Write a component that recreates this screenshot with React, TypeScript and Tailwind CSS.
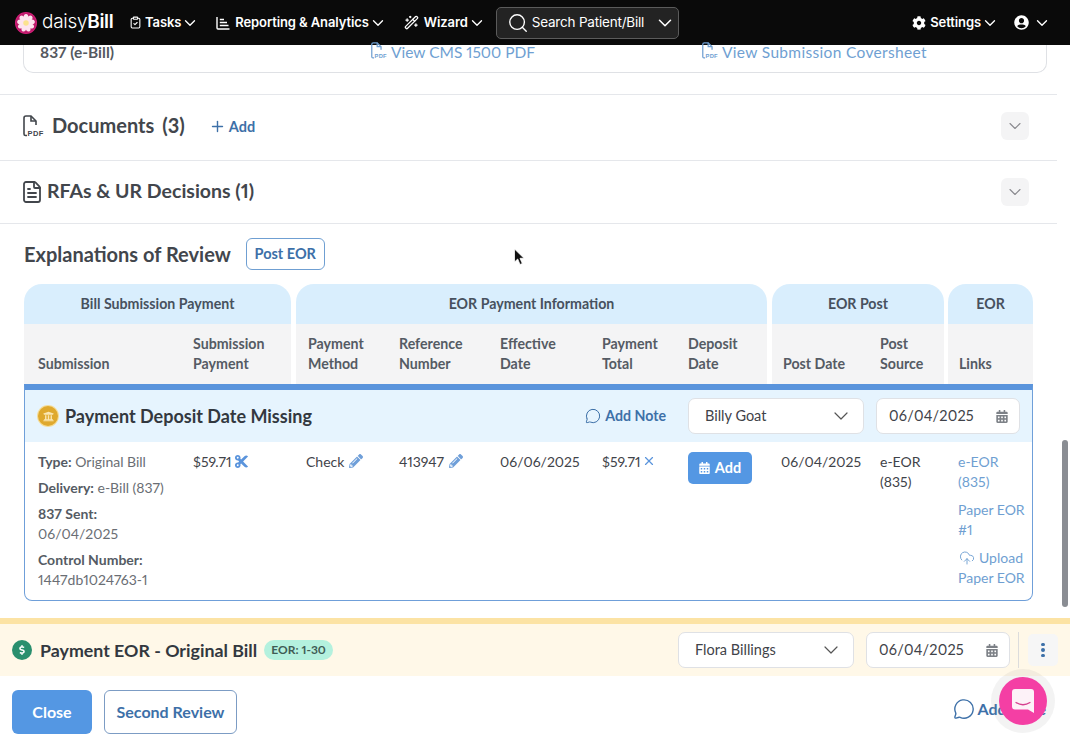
import React from "react";
import { ChevronDown, ClipboardCheck, WandSparkles, Search, Plus, MessageCircle, CloudUpload, X, FileText } from "lucide-react";
import { FaCog, FaUserCircle, FaPencilAlt, FaCalendarAlt, FaCut, FaDollarSign, FaUniversity } from "react-icons/fa";

const body = "[font-family:'Lato','Liberation_Sans',sans-serif] proportional-nums";

function Pdf({ className }: { className?: string }) {
  return (
    <svg viewBox="0 0 22 22" className={className} fill="none" stroke="currentColor" strokeWidth="1.600">
      <path d="M4 20.500 H2.500 Q1 20.500 1 19 V3 Q1 1 3 1 H8 L13 6 V10" />
      <path d="M8 1 V6 H13" />
      <text x="4.500" y="20.800" fontSize="7.500" fontFamily="Liberation Sans" fontWeight="700" stroke="none" fill="currentColor" letterSpacing="0.4">PDF</text>
    </svg>
  );
}

function Logo() {
  const petals = [0, 40, 80, 120, 160, 200, 240, 280, 320];
  return (
    <svg viewBox="0 0 24 24" className="w-[22px] h-[22px] shrink-0">
      <circle cx="12" cy="12" r="12" fill="#d61f7a" />
      <circle cx="12" cy="12" r="11" fill="#8f1450" opacity="0.35" />
      {petals.map((a) => (
        <ellipse key={a} cx="12" cy="6.500" rx="2.700" ry="4.300" fill="#fde4ee" transform={`rotate(${a} 12 12)`} />
      ))}
      <circle cx="12" cy="12" r="3" fill="#fbe38e" />
    </svg>
  );
}

function NavItem({ icon, label, gap }: { icon: React.ReactNode; label: string; gap: string }) {
  return (
    <div className="flex items-center text-white font-semibold text-[13px] tracking-[-0.1px] whitespace-nowrap">
      {icon}
      <span className={gap}>{label}</span>
      <ChevronDown className="w-[18px] h-[18px]" strokeWidth={1.8} />
    </div>
  );
}

function BarsIcon() {
  return (
    <svg viewBox="0 0 14 14" className="w-[14px] h-[14px]" fill="none" stroke="white" strokeWidth="1.400">
      <path d="M1 1 V12 Q1 13 2 13 H13.500" />
      <path d="M3.800 3.500 H8 M3.800 6.500 H11 M3.800 9.500 H12.500" strokeWidth="1.500" />
    </svg>
  );
}

function Nav() {
  return (
    <header className="h-[45px] shrink-0 bg-[#0a0a0a] flex items-center pl-[15px] pr-[19px] [font-family:'Inter',sans-serif]">
      <Logo />
      <div className="ml-[5px] text-white text-[19px] tracking-[-0.3px] w-[76px]">
        <span className="font-light">daisy</span>
        <span className="font-semibold">Bill</span>
      </div>
      <div className="ml-[11px]">
        <NavItem gap="ml-[3px]" icon={<ClipboardCheck className="w-[13px] h-[15px]" strokeWidth={2} />} label="Tasks" />
      </div>
      <div className="ml-[17px]">
        <NavItem gap="ml-[5px]" icon={<BarsIcon />} label="Reporting & Analytics" />
      </div>
      <div className="ml-[17px]">
        <NavItem gap="ml-[5px]" icon={<WandSparkles className="w-[15px] h-[15px]" strokeWidth={2} />} label="Wizard" />
      </div>
      <div className="ml-[10px] w-[183px] h-[32px] rounded-[5px] border border-[#5b5b5b] bg-[#232323] flex items-center pl-[10px] pr-[2px] text-white">
        <Search className="w-[22px] h-[22px]" strokeWidth={1.500} />
        <span className="ml-[3px] text-[13.500px] tracking-[-0.2px] whitespace-nowrap">Search Patient/Bill</span>
        <ChevronDown className="ml-auto w-[22px] h-[22px]" strokeWidth={1.700} />
      </div>
      <div className="ml-auto flex items-center">
        <NavItem gap="ml-[4px]" icon={<FaCog className="w-[14px] h-[14px]" />} label="Settings" />
        <div className="flex items-center ml-[15px] text-white">
          <FaUserCircle className="w-[15px] h-[15px]" />
          <ChevronDown className="w-[18px] h-[18px] ml-[4px]" strokeWidth={1.800} />
        </div>
      </div>
    </header>
  );
}

function SectionToggle() {
  return (
    <div className="ml-auto w-[28px] h-[28px] rounded-[6px] bg-[#f4f4f5] flex items-center justify-center text-[#8a8a8f]">
      <ChevronDown className="w-[20px] h-[20px]" strokeWidth={1.300} />
    </div>
  );
}

function Head({ width, children }: { width: string; children: React.ReactNode }) {
  return <div className={width}>{children}</div>;
}

function Group({ title, width, children }: { title: string; width: string; children: React.ReactNode }) {
  return (
    <div className={`${width} shrink-0`}>
      <div className="h-[40px] pb-[1px] rounded-t-[18px] bg-[#d9eefd] flex items-center justify-center font-bold text-[14.200px] text-[#47515e]">{title}</div>
      <div className="h-[60px] bg-[#f4f4f5] flex items-end pb-[10px] font-bold text-[14.200px] leading-[20px] text-[#555b64]">{children}</div>
    </div>
  );
}

function Select({ label, width }: { label: string; width: string }) {
  return (
    <div className={`${width} h-[36px] rounded-[7px] bg-white border border-[#dfe1e5] flex items-center pl-[16px] pr-[10px] text-[14.500px] text-[#3f4349]`}>
      <span>{label}</span>
      <ChevronDown className="ml-auto w-[24px] h-[24px] text-[#555]" strokeWidth={1.200} />
    </div>
  );
}

function DateBox({ width }: { width: string }) {
  return (
    <div className={`${width} h-[36px] rounded-[7px] bg-white border border-[#dfe1e5] flex items-center pl-[12px] pr-[11px] text-[14.500px] text-[#3f4349] tracking-[0.2px]`}>
      <span>06/04/2025</span>
      <FaCalendarAlt className="ml-auto w-[12px] h-[13px] text-[#7d8187]" />
    </div>
  );
}

function Intercom() {
  return (
    <div className="absolute left-[991px] top-[669px] w-[64px] h-[64px] rounded-full bg-[#8a8a8a]/10 flex items-center justify-center">
      <div className="w-[48px] h-[48px] rounded-full bg-[#f43fa4] flex items-center justify-center">
        <svg viewBox="0 0 22 24" className="w-[22px] h-[24px]">
          <path d="M3 0 H19 Q22 0 22 3 V24 L16 20.500 H3 Q0 20.500 0 17.500 V3 Q0 0 3 0 Z" fill="#fdf2f8" />
          <path d="M4 13.500 Q11 18 18 13.500" fill="none" stroke="#d6408f" strokeWidth="1.300" strokeLinecap="round" />
        </svg>
      </div>
    </div>
  );
}

export default function App() {
  return (
    <div className={`relative w-[1070px] h-[736px] overflow-hidden bg-white flex flex-col ${body}`}>
      <Nav />
      <main className="flex-1 min-h-0 flex flex-col">
        <div className="mx-[23px] h-[28px] shrink-0 rounded-b-[10px] border border-t-0 border-[#dfe1e5] flex items-start text-[15.500px]">
          <div className="ml-[16px] w-[331px] font-bold text-[#55595f] leading-[14px]">837 (e-Bill)</div>
          <div className="flex items-center text-[#6f9fd2] w-[331px] leading-[14px]">
            <Pdf className="w-[17px] h-[17px] -mt-[4px]" />
            <span className="ml-[3px]">View CMS 1500 PDF</span>
          </div>
          <div className="flex items-center text-[#6f9fd2] leading-[14px]">
            <Pdf className="w-[17px] h-[17px] -mt-[4px]" />
            <span className="ml-[3px] tracking-[0.33px]">View Submission Coversheet</span>
          </div>
        </div>

        <div className="mt-[21px] mr-[13px] h-[67px] shrink-0 border-y border-[#e5e7eb] flex items-center pl-[23px] pr-[28px]">
          <Pdf className="w-[22px] h-[22px] text-[#42464c] -mt-[4px]" />
          <span className="ml-[7px] -mt-[6px] font-bold text-[20px] text-[#42464c]">Documents</span>
          <span className="ml-[8px] -mt-[6px] font-bold text-[20px] text-[#42464c]">(3)</span>
          <div className="ml-[24px] -mt-[2px] flex items-center text-[#3d70a8] font-bold text-[14.500px]">
            <Plus className="w-[17px] h-[17px]" strokeWidth={2} />
            <span className="ml-[3px]">Add</span>
          </div>
          <div className="ml-auto -mt-[4px]"><SectionToggle /></div>
        </div>
        <div className="mr-[13px] h-[63px] shrink-0 border-b border-[#e5e7eb] flex items-center pl-[20px] pr-[28px]">
          <FileText className="w-[24px] h-[24px] text-[#42464c]" strokeWidth={1.800} />
          <span className="ml-[3px] -mt-[2px] font-bold text-[19.500px] text-[#42464c]">RFAs &amp; UR Decisions (1)</span>
          <SectionToggle />
        </div>

        <div className="h-[60px] shrink-0 flex items-center pl-[24px]">
          <span className="font-bold text-[20px] text-[#42464c]">Explanations of Review</span>
          <div className="ml-[15px] w-[79px] h-[32px] rounded-[6px] border border-[#6f9fd2] flex items-center justify-center text-[#3d70a8] font-bold text-[14.500px]">Post EOR</div>
        </div>

        <div className="ml-[24px] w-[1009px] flex gap-[5px]">
          <Group title="Bill Submission Payment" width="w-[267px]">
            <Head width="w-[169px] pl-[14px] shrink-0">Submission</Head>
            <Head width="w-[98px] shrink-0">Submission<br />Payment</Head>
          </Group>
          <Group title="EOR Payment Information" width="w-[471px]">
            <Head width="w-[103px] pl-[12px] shrink-0">Payment<br />Method</Head>
            <Head width="w-[101px] shrink-0">Reference<br />Number</Head>
            <Head width="w-[102px] shrink-0">Effective<br />Date</Head>
            <Head width="w-[86px] shrink-0">Payment<br />Total</Head>
            <Head width="w-[79px] shrink-0">Deposit<br />Date</Head>
          </Group>
          <Group title="EOR Post" width="w-[172px]">
            <Head width="w-[108px] pl-[11px] shrink-0">Post Date</Head>
            <Head width="w-[64px] shrink-0">Post<br />Source</Head>
          </Group>
          <div className="-ml-[1px]">
            <Group title="EOR" width="w-[85px]">
              <Head width="pl-[11px]">Links</Head>
            </Group>
          </div>
        </div>

        <div className="ml-[24px] w-[1009px] h-[217px] shrink-0 border-t-[6px] border-x border-b border-[#6f9fd9] border-t-[#5a94dc] rounded-b-[8px] flex flex-col">
          <div className="h-[52px] shrink-0 bg-[#e6f4fe] flex items-center pl-[13px] pr-[12px]">
            <div className="w-[20px] h-[20px] rounded-full bg-[#dfa92e] ring-1 ring-[#f5dd9a] flex items-center justify-center text-[#fbe7b4]">
              <FaUniversity className="w-[11px] h-[11px]" />
            </div>
            <span className="ml-[7px] font-bold text-[18px] text-[#33383f]">Payment Deposit Date Missing</span>
            <div className="ml-auto flex items-center text-[#3d70a8] font-bold text-[14.200px]">
              <MessageCircle className="w-[16px] h-[16px]" strokeWidth={1.500} />
              <span className="ml-[4px]">Add Note</span>
            </div>
            <div className="ml-[22px]"><Select label="Billy Goat" width="w-[176px]" /></div>
            <div className="ml-[12px]"><DateBox width="w-[144px]" /></div>
          </div>
          <div className="flex-1 flex text-[14px] leading-[20px] text-[#3f4349] pt-[10px]">
            <div className="w-[168px] pl-[13px] shrink-0 text-[#6a6e74]">
              <p><b className="text-[#555b64]">Type:</b> Original Bill</p>
              <p className="mt-[6px]"><b className="text-[#555b64]">Delivery:</b> e-Bill (837)</p>
              <p className="mt-[6px]"><b className="text-[#555b64]">837 Sent:</b><br />06/04/2025</p>
              <p className="mt-[6px]"><b className="text-[#555b64]">Control Number:</b><br />1447db1024763-1</p>
            </div>
            <div className="w-[113px] shrink-0 flex items-start">
              <span>$59.71</span>
              <FaCut className="ml-[3px] mt-[2px] w-[15px] h-[15px] text-[#5a94dc]" />
            </div>
            <div className="w-[93px] shrink-0 flex items-start">
              <span>Check</span>
              <FaPencilAlt className="ml-[5px] mt-[2px] w-[14px] h-[14px] text-[#6f9fd9]" />
            </div>
            <div className="w-[101px] shrink-0 flex items-start">
              <span>413947</span>
              <FaPencilAlt className="ml-[5px] mt-[2px] w-[14px] h-[14px] text-[#6f9fd9]" />
            </div>
            <div className="w-[102px] shrink-0">06/06/2025</div>
            <div className="w-[86px] shrink-0 flex items-start">
              <span>$59.71</span>
              <X className="ml-[2px] mt-[2px] w-[14px] h-[14px] text-[#5a94dc]" strokeWidth={2} />
            </div>
            <div className="w-[93px] shrink-0">
              <div className="w-[64px] h-[32px] rounded-[5px] bg-[#5497e3] flex items-center justify-center text-white font-bold text-[14.500px]">
                <FaCalendarAlt className="w-[11px] h-[12px]" />
                <span className="ml-[5px]">Add</span>
              </div>
            </div>
            <div className="w-[99px] shrink-0">06/04/2025</div>
            <div className="w-[78px] shrink-0">e-EOR<br />(835)</div>
            <div className="flex-1 text-[#6f9fd2]">
              <p>e-EOR<br />(835)</p>
              <p className="mt-[8px]">Paper EOR<br />#1</p>
              <p className="mt-[8px]"><CloudUpload className="inline w-[18px] h-[16px] -mt-[3px] mr-[3px]" strokeWidth={1.400} />Upload<br />Paper EOR</p>
            </div>
          </div>
        </div>

        <div className="mt-[17px] h-[58px] shrink-0 border-t-[6px] border-[#fce3a4] bg-[#fff8e8] flex items-center pl-[12px] pr-[12px]">
          <div className="w-[20px] h-[20px] rounded-full bg-[#2a8f6e] flex items-center justify-center text-white">
            <FaDollarSign className="w-[10px] h-[10px]" />
          </div>
          <span className="ml-[8px] font-bold text-[17.800px] text-[#33383f]">Payment EOR - Original Bill</span>
          <div className="ml-[7px] h-[20px] w-[69px] rounded-full bg-[#b4f1de] flex items-center justify-center text-[12px] font-bold text-[#3f5c55]">EOR: 1-30</div>
          <div className="ml-auto"><Select label="Flora Billings" width="w-[176px]" /></div>
          <div className="ml-[12px]"><DateBox width="w-[144px]" /></div>
          <div className="ml-[8px] w-px h-[36px] bg-[#dcdcdc]" />
          <div className="ml-[9px] w-[30px] h-[32px] rounded-[5px] bg-[#f6f6f6] flex flex-col items-center justify-center gap-[2px]">
            <i className="block w-[3.500px] h-[3.500px] rounded-full bg-[#3d70a8]" />
            <i className="block w-[3.500px] h-[3.500px] rounded-full bg-[#3d70a8]" />
            <i className="block w-[3.500px] h-[3.500px] rounded-full bg-[#3d70a8]" />
          </div>
        </div>

        <div className="flex-1 flex items-start pt-[14px] pl-[12px] pr-[24px]">
          <div className="w-[80px] h-[44px] rounded-[6px] bg-[#5497e3] flex items-center justify-center text-white font-bold text-[16px]">Close</div>
          <div className="ml-[12px] w-[133px] h-[44px] rounded-[6px] border border-[#7c9cc4] flex items-center justify-center text-[#3d70a8] font-bold text-[16px]">Second Review</div>
          <div className="ml-auto flex items-center text-[#3d70a8] font-bold text-[16px] mt-[7px]">
            <MessageCircle className="w-[22px] h-[22px]" strokeWidth={1.500} />
            <span className="ml-[2px]">Add Note</span>
          </div>
        </div>
      </main>

      <div className="absolute left-[1062px] top-[440px] w-[6px] h-[167px] rounded-full bg-[#8a8d93]" />
      <svg viewBox="0 0 12 18" className="absolute left-[513px] top-[248px] w-[12px] h-[18px]">
        <path d="M1.500 1 V14 L4.700 11 L7 16.500 L9.300 15.500 L7 10.300 H11 Z" fill="#111" stroke="white" strokeWidth="0.800" />
      </svg>
      <Intercom />
    </div>
  );
}
